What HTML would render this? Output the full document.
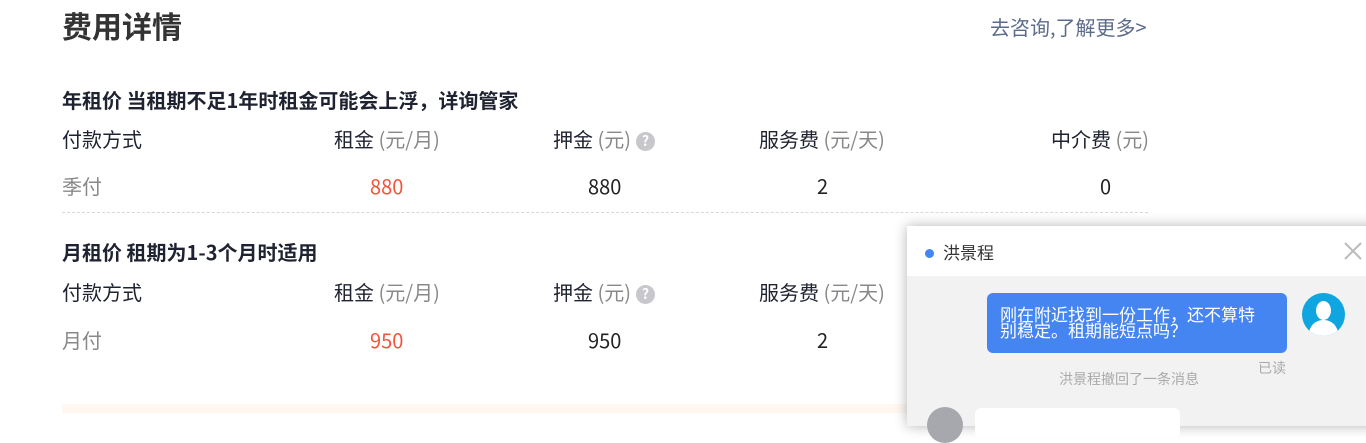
<!DOCTYPE html>
<html><head><meta charset="utf-8"><style>
body{margin:0;width:1366px;height:413px;overflow:hidden;background:#fff;font-family:"Noto Sans CJK SC","Liberation Sans",sans-serif;position:relative;color:#222}
.a{position:absolute;white-space:nowrap;line-height:1}
.g{color:#888}
.r{color:#f4533a}
.h{font-size:20px;color:#1f2230}
.q{display:inline-block;width:19px;height:19px;border-radius:50%;background:#c8c8cc;color:#fff;font-size:14px;font-weight:bold;text-align:center;line-height:19px;vertical-align:1px;margin-left:5px}
</style></head><body>
<div class="a" style="left:62px;top:10px;font-size:30px;font-weight:bold;color:#333">费用详情</div>
<div class="a" style="left:990px;top:17px;font-size:20px;color:#5c6b8c">去咨询,了解更多&gt;</div>

<div class="a" style="left:62px;top:90px;font-size:20px;font-weight:bold;color:#1f2230">年租价 当租期不足1年时租金可能会上浮，详询管家</div>
<div class="a h" style="left:62px;top:129px">付款方式</div>
<div class="a h" style="left:334px;top:129px">租金 <span class="g">(元/月)</span></div>
<div class="a h" style="left:553px;top:129px">押金 <span class="g">(元)</span><span class="q">?</span></div>
<div class="a h" style="left:759px;top:129px">服务费 <span class="g">(元/天)</span></div>
<div class="a h" style="left:1051px;top:129px">中介费 <span class="g">(元)</span></div>
<div class="a g" style="left:62px;top:176px;font-size:20px">季付</div>
<div class="a r" style="left:370px;top:176px;font-size:20px">880</div>
<div class="a" style="left:588px;top:176px;font-size:20px">880</div>
<div class="a" style="left:817px;top:176px;font-size:20px">2</div>
<div class="a" style="left:1100px;top:176px;font-size:20px">0</div>
<div style="position:absolute;left:62px;top:212px;width:1086px;border-top:1px dashed #d8d8d8"></div>

<div class="a" style="left:62px;top:242px;font-size:20px;font-weight:bold;color:#1f2230">月租价 租期为1-3个月时适用</div>
<div class="a h" style="left:62px;top:282px">付款方式</div>
<div class="a h" style="left:334px;top:282px">租金 <span class="g">(元/月)</span></div>
<div class="a h" style="left:553px;top:282px">押金 <span class="g">(元)</span><span class="q">?</span></div>
<div class="a h" style="left:759px;top:282px">服务费 <span class="g">(元/天)</span></div>
<div class="a g" style="left:62px;top:330px;font-size:20px">月付</div>
<div class="a r" style="left:370px;top:330px;font-size:20px">950</div>
<div class="a" style="left:588px;top:330px;font-size:20px">950</div>
<div class="a" style="left:817px;top:330px;font-size:20px">2</div>
<div style="position:absolute;left:62px;top:404px;width:900px;height:9px;background:#fff7f0"></div>

<div style="position:absolute;left:907px;top:226px;width:470px;height:200px;background:#f2f2f2;box-shadow:0 0 12px rgba(0,0,0,.3)">
 <div style="height:50px;background:#fff;position:relative">
  <div style="position:absolute;left:18px;top:23px;width:9px;height:9px;border-radius:50%;background:#4285f4"></div>
  <div class="a" style="left:36px;top:17px;font-size:17px;color:#333">洪景程</div>
  <svg style="position:absolute;left:437px;top:16px" width="18" height="18"><path d="M1 1L17 17M17 1L1 17" stroke="#bbb" stroke-width="2"/></svg>
 </div>
 <div style="position:absolute;left:80px;top:67px;width:300px;height:60px;background:#4585f1;border-radius:6px"></div>
 <div style="position:absolute;left:93px;top:80px;font-size:17px;line-height:16px;color:#fff;width:264px">刚在附近找到一份工作，还不算特别稳定。租期能短点吗？</div>
 <div style="position:absolute;left:395px;top:67px;width:43px;height:43px;border-radius:50%;background:#0ea5e0;overflow:hidden">
  <div style="position:absolute;left:14px;top:8px;width:15px;height:19px;border-radius:50%;background:#fff"></div>
  <div style="position:absolute;left:7px;top:27px;width:29px;height:20px;border-radius:14px 14px 0 0;background:#fff"></div>
 </div>
 <div class="a" style="left:351px;top:135px;font-size:14px;color:#aaa">已读</div>
 <div class="a" style="left:152px;top:146px;font-size:14px;color:#aaa">洪景程撤回了一条消息</div>
 <div style="position:absolute;left:20px;top:181px;width:36px;height:36px;border-radius:50%;background:#a6a8ae"></div>
 <div style="position:absolute;left:68px;top:182px;width:205px;height:30px;border-radius:6px;background:#fff"></div>
</div>
</body></html>
